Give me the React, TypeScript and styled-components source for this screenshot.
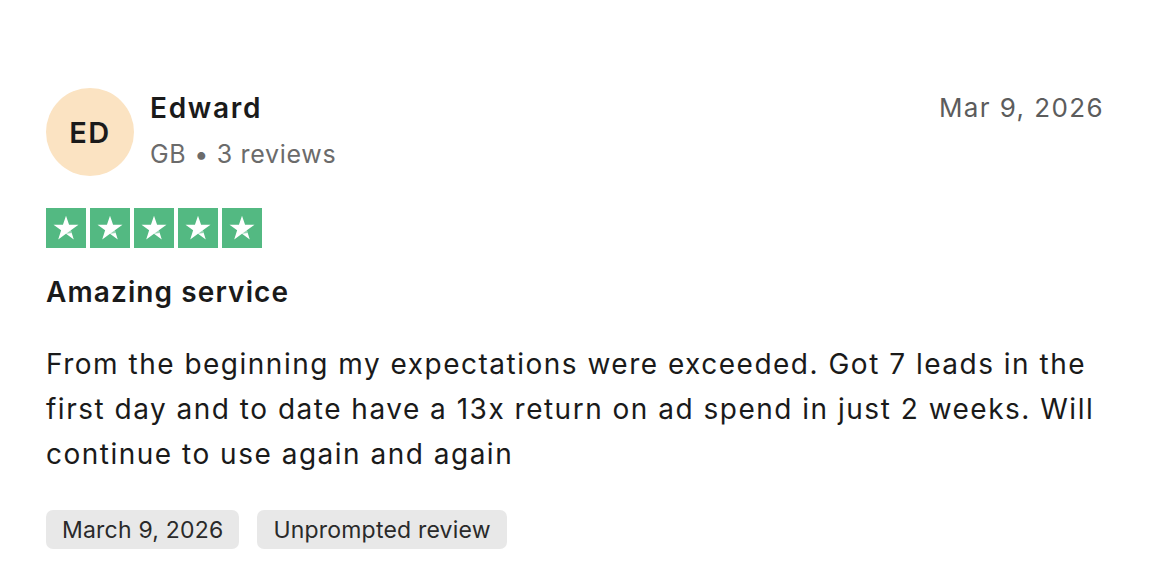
import React from 'react';
import styled, { createGlobalStyle } from 'styled-components';

const GlobalStyle = createGlobalStyle`
    html, body {
        margin: 0;
        padding: 0;
        background: #ffffff;
    }
    body {
        font-family: Inter, 'Liberation Sans', sans-serif;
        color: #1a1a1a;
        -webkit-font-smoothing: antialiased;
    }
`;

const Card = styled.article`
    width: 1162px;
    height: 586px;
    box-sizing: border-box;
    padding: 88px 58px 0 46px;
`;

const Header = styled.header`
    display: flex;
    align-items: flex-start;
`;

const Avatar = styled.div`
    width: 88px;
    height: 88px;
    border-radius: 50%;
    background: #fbe3c2;
    display: flex;
    align-items: center;
    justify-content: center;
    font-size: 29px;
    font-weight: 600;
    letter-spacing: 1.5px;
    color: #1a1a1a;
    flex-shrink: 0;
`;

const Consumer = styled.div`
    margin-left: 16px;
    flex: 1;
    display: flex;
    flex-direction: column;
`;

const Name = styled.div`
    font-size: 28px;
    font-weight: 600;
    line-height: 40px;
    letter-spacing: 1.7px;
`;

const Meta = styled.div`
    font-size: 25px;
    color: #6b6b6b;
    line-height: 40px;
    margin-top: 6px;
    letter-spacing: 0.7px;
`;

const PostedDate = styled.time`
    font-size: 26px;
    color: #5c5c5c;
    line-height: 40px;
    letter-spacing: 1.4px;
`;

const Stars = styled.div`
    display: flex;
    gap: 4px;
    margin-top: 32px;
`;

const StarBox = styled.div`
    width: 40px;
    height: 40px;
    background: #53b982;
    display: flex;
    align-items: center;
    justify-content: center;
`;

const Title = styled.h2`
    margin: 24px 0 0;
    font-size: 28px;
    font-weight: 600;
    line-height: 40px;
    letter-spacing: 1.1px;
`;

const Body = styled.p`
    margin: 30px 0 0;
    font-size: 28px;
    line-height: 45px;
    letter-spacing: 1.5px;
    color: #1a1a1a;
`;

const Tags = styled.div`
    display: flex;
    gap: 18px;
    margin-top: 33px;
`;

const Tag = styled.span`
    height: 39px;
    padding: 0 16px;
    border-radius: 7px;
    background: #e8e8e8;
    display: flex;
    align-items: center;
    font-size: 23px;
    letter-spacing: 0.2px;
    color: #2a2a2a;
`;

const Star: React.FC = () => (
    <StarBox>
        <svg width="30" height="30" viewBox="0 0 24 24">
            <path
                d="M12 2.2l2.45 7.2H22l-6.1 4.45 2.33 7.25L12 16.6l-6.23 4.5 2.33-7.25L2 9.4h7.55z"
                fill="#ffffff"
            />
            <path d="M15.9 13.85l0.7 2.2L12 16.6z" fill="#53b982" opacity="0.6" />
        </svg>
    </StarBox>
);

const App: React.FC = () => (
    <>
        <GlobalStyle />
        <Card>
            <Header>
                <Avatar>ED</Avatar>
                <Consumer>
                    <Name>Edward</Name>
                    <Meta>GB • 3 reviews</Meta>
                </Consumer>
                <PostedDate>Mar 9, 2026</PostedDate>
            </Header>
            <Stars>
                {[0, 1, 2, 3, 4].map((i) => (
                    <Star key={i} />
                ))}
            </Stars>
            <Title>Amazing service</Title>
            <Body>
                From the beginning my expectations were exceeded. Got 7 leads in the first day and to date have a
                13x return on ad spend in just 2 weeks. Will continue to use again and again
            </Body>
            <Tags>
                <Tag>March 9, 2026</Tag>
                <Tag>Unprompted review</Tag>
            </Tags>
        </Card>
    </>
);

export default App;
